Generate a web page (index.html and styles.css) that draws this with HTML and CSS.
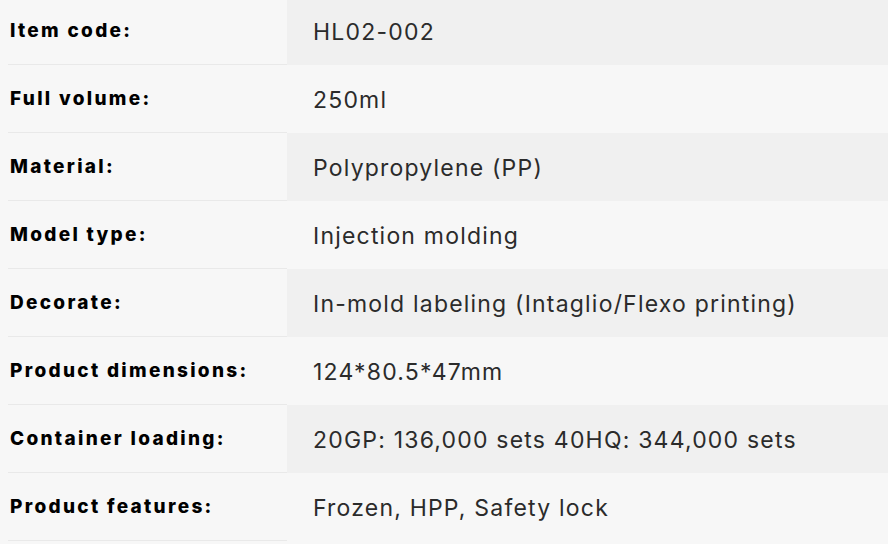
FILE: index.html
```html
<!DOCTYPE html>
<html lang="en">
<head>
<meta charset="utf-8">
<title>Product specs</title>
<link rel="stylesheet" href="styles.css">
</head>
<body>
<div class="spec">
  <div class="label">Item code:</div><div class="value shade">HL02-002</div>
  <div class="label">Full volume:</div><div class="value">250ml</div>
  <div class="label">Material:</div><div class="value shade">Polypropylene (PP)</div>
  <div class="label">Model type:</div><div class="value">Injection molding</div>
  <div class="label">Decorate:</div><div class="value shade">In-mold labeling (Intaglio/Flexo printing)</div>
  <div class="label">Product dimensions:</div><div class="value">124*80.5*47mm</div>
  <div class="label">Container loading:</div><div class="value shade">20GP: 136,000 sets 40HQ: 344,000 sets</div>
  <div class="label">Product features:</div><div class="value">Frozen, HPP, Safety lock</div>
</div>
</body>
</html>
```
FILE: styles.css
```css
html, body {
  margin: 0;
  padding: 0;
  background: #f7f7f7;
  overflow: hidden;
}
.spec {
  display: grid;
  grid-template-columns: 279px 1fr;
  grid-auto-rows: 68px;
  margin: -3px 0 0 8px;
}
.label {
  display: flex;
  align-items: center;
  padding-left: 2px;
  border-bottom: 1px solid #e9e9e9;
  font-family: "Inter", "DejaVu Sans", sans-serif;
  font-weight: 800;
  font-size: 19px;
  letter-spacing: 2.3px;
  color: #000;
}
.value {
  display: flex;
  align-items: center;
  padding-left: 26px;
  padding-top: 2px;
  font-family: "Inter", "DejaVu Sans", sans-serif;
  font-weight: 400;
  font-size: 23px;
  letter-spacing: 1.2px;
  color: #2b2b2b;
}
.shade {
  background: #f0f0f0;
}
```
